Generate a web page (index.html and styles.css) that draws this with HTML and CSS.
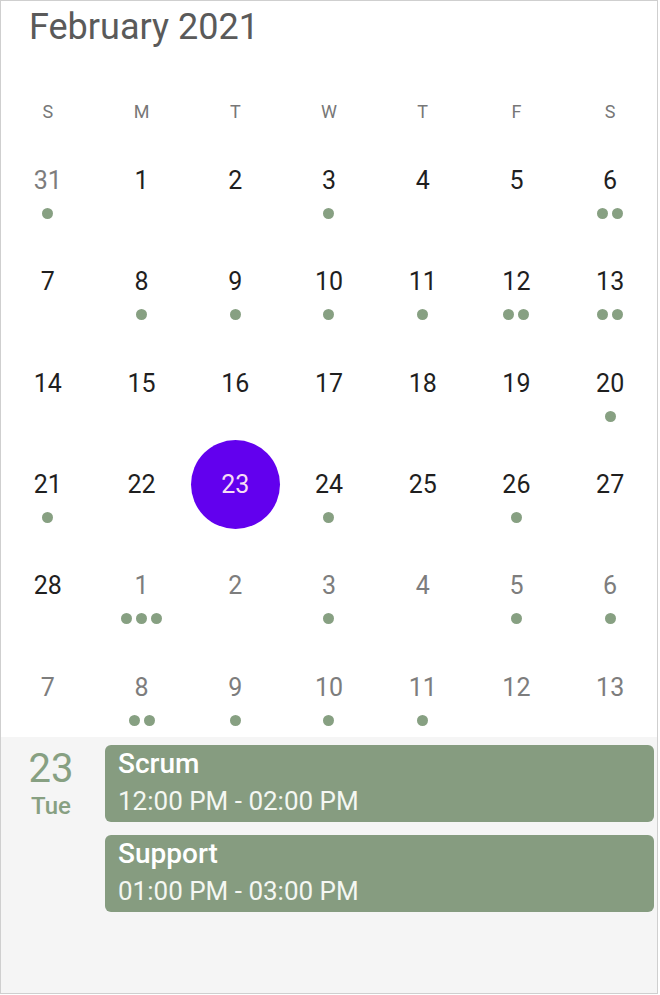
FILE: index.html
```html
<!DOCTYPE html>
<html>
<head>
<meta charset="utf-8">
<link rel="stylesheet" href="styles.css">
</head>
<body>
<div class="frame">
  <div class="title">February 2021</div>
  <div class="weekdays">
    <span>S</span><span>M</span><span>T</span><span>W</span><span>T</span><span>F</span><span>S</span>
  </div>
  <div class="month">
    <div class="cell other"><span class="num">31</span><span class="dots"><i></i></span></div>
    <div class="cell"><span class="num">1</span><span class="dots"></span></div>
    <div class="cell"><span class="num">2</span><span class="dots"></span></div>
    <div class="cell"><span class="num">3</span><span class="dots"><i></i></span></div>
    <div class="cell"><span class="num">4</span><span class="dots"></span></div>
    <div class="cell"><span class="num">5</span><span class="dots"></span></div>
    <div class="cell"><span class="num">6</span><span class="dots"><i></i><i></i></span></div>

    <div class="cell"><span class="num">7</span><span class="dots"></span></div>
    <div class="cell"><span class="num">8</span><span class="dots"><i></i></span></div>
    <div class="cell"><span class="num">9</span><span class="dots"><i></i></span></div>
    <div class="cell"><span class="num">10</span><span class="dots"><i></i></span></div>
    <div class="cell"><span class="num">11</span><span class="dots"><i></i></span></div>
    <div class="cell"><span class="num">12</span><span class="dots"><i></i><i></i></span></div>
    <div class="cell"><span class="num">13</span><span class="dots"><i></i><i></i></span></div>

    <div class="cell"><span class="num">14</span><span class="dots"></span></div>
    <div class="cell"><span class="num">15</span><span class="dots"></span></div>
    <div class="cell"><span class="num">16</span><span class="dots"></span></div>
    <div class="cell"><span class="num">17</span><span class="dots"></span></div>
    <div class="cell"><span class="num">18</span><span class="dots"></span></div>
    <div class="cell"><span class="num">19</span><span class="dots"></span></div>
    <div class="cell"><span class="num">20</span><span class="dots"><i></i></span></div>

    <div class="cell"><span class="num">21</span><span class="dots"><i></i></span></div>
    <div class="cell"><span class="num">22</span><span class="dots"></span></div>
    <div class="cell selected"><span class="num">23</span><span class="dots"></span></div>
    <div class="cell"><span class="num">24</span><span class="dots"><i></i></span></div>
    <div class="cell"><span class="num">25</span><span class="dots"></span></div>
    <div class="cell"><span class="num">26</span><span class="dots"><i></i></span></div>
    <div class="cell"><span class="num">27</span><span class="dots"></span></div>

    <div class="cell"><span class="num">28</span><span class="dots"></span></div>
    <div class="cell other"><span class="num">1</span><span class="dots"><i></i><i></i><i></i></span></div>
    <div class="cell other"><span class="num">2</span><span class="dots"></span></div>
    <div class="cell other"><span class="num">3</span><span class="dots"><i></i></span></div>
    <div class="cell other"><span class="num">4</span><span class="dots"></span></div>
    <div class="cell other"><span class="num">5</span><span class="dots"><i></i></span></div>
    <div class="cell other"><span class="num">6</span><span class="dots"><i></i></span></div>

    <div class="cell other"><span class="num">7</span><span class="dots"></span></div>
    <div class="cell other"><span class="num">8</span><span class="dots"><i></i><i></i></span></div>
    <div class="cell other"><span class="num">9</span><span class="dots"><i></i></span></div>
    <div class="cell other"><span class="num">10</span><span class="dots"><i></i></span></div>
    <div class="cell other"><span class="num">11</span><span class="dots"><i></i></span></div>
    <div class="cell other"><span class="num">12</span><span class="dots"></span></div>
    <div class="cell other"><span class="num">13</span><span class="dots"></span></div>
  </div>
  <div class="agenda">
    <div class="agenda-date">
      <div class="agenda-day">23</div>
      <div class="agenda-wd">Tue</div>
    </div>
    <div class="events">
      <div class="event">
        <div class="ev-title">Scrum</div>
        <div class="ev-time">12:00 PM - 02:00 PM</div>
      </div>
      <div class="event">
        <div class="ev-title">Support</div>
        <div class="ev-time">01:00 PM - 03:00 PM</div>
      </div>
    </div>
  </div>
</div>
</body>
</html>
```

FILE: styles.css
```css
* { box-sizing: border-box; }
html, body { margin: 0; padding: 0; background: #ffffff; }
body { font-family: Roboto, "Liberation Sans", sans-serif; }

.frame {
  width: 658px;
  height: 994px;
  border: 1px solid #cfcfcf;
  display: flex;
  flex-direction: column;
  overflow: hidden;
  background: #ffffff;
}

.title {
  height: 61px;
  padding: 4px 0 0 28px;
  font-size: 36px;
  line-height: 44px;
  color: #5a5a5a;
}

.weekdays {
  height: 88px;
  padding-top: 40px;
  display: grid;
  grid-template-columns: repeat(7, 1fr);
  font-size: 18px;
  line-height: 20px;
  color: #777777;
  text-align: center;
}

.month {
  height: 587px;
  display: grid;
  grid-template-columns: repeat(7, 1fr);
  grid-template-rows: repeat(5, 101.33px) 1fr;
}

.cell {
  position: relative;
  display: flex;
  flex-direction: column;
  align-items: center;
  padding-top: 17px;
}

.num {
  position: relative;
  z-index: 1;
  font-size: 25px;
  line-height: 28px;
  color: #1f1f1f;
}

.other .num { color: #7d7d7d; }

.dots {
  display: flex;
  gap: 4px;
  margin-top: 13px;
  height: 11px;
}

.dots i {
  display: block;
  width: 11px;
  height: 11px;
  border-radius: 50%;
  background: #87a082;
}

.selected::before {
  content: "";
  position: absolute;
  left: 50%;
  top: 31px;
  width: 89px;
  height: 89px;
  margin: -44.5px 0 0 -44.5px;
  border-radius: 50%;
  background: #6200ee;
}

.selected .num { color: #f6dcf5; }

.agenda {
  flex: 1;
  background: #f5f5f5;
  display: flex;
  padding-top: 8px;
}

.agenda-date {
  width: 104px;
  display: flex;
  flex-direction: column;
  align-items: center;
  color: #87a082;
  padding-right: 4px;
}

.agenda-day {
  font-size: 40px;
  line-height: 47px;
}

.agenda-wd {
  font-size: 24px;
  font-weight: 500;
  line-height: 28px;
}

.events {
  flex: 1;
  display: flex;
  flex-direction: column;
  gap: 13px;
  margin-right: 3px;
}

.event {
  height: 77px;
  background: #869c80;
  border-radius: 6px;
  padding: 3px 13px 0;
  color: #ffffff;
}

.ev-title {
  font-size: 28px;
  font-weight: 500;
  line-height: 32px;
}

.ev-time {
  font-size: 26px;
  line-height: 30px;
  margin-top: 6px;
  color: #f4f7f2;
}
```
